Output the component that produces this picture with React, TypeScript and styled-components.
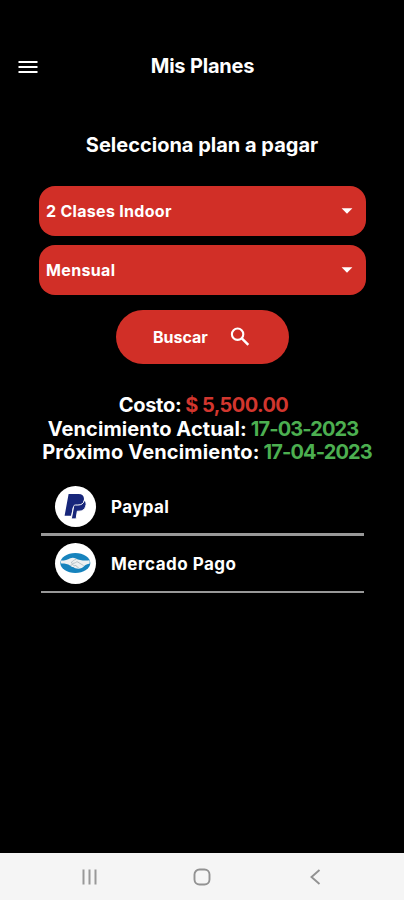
import React from "react";
import styled, { createGlobalStyle } from "styled-components";

const Global = createGlobalStyle`
  * { box-sizing: border-box; }
  body { margin: 0; background: #000; }
`;

const Screen = styled.div`
  width: 404px;
  height: 900px;
  display: flex;
  flex-direction: column;
  background: #000;
  color: #fff;
  font-family: Inter, "Liberation Sans", sans-serif;
  font-weight: 700;
  overflow: hidden;
`;

const Header = styled.header`
  display: grid;
  grid-template-columns: 56px 1fr 55px;
  align-items: center;
  height: 52px;
  margin-top: 40px;
`;

const MenuButton = styled.button`
  display: flex;
  justify-content: center;
  padding: 0;
  border: 0;
  background: none;
`;

const Label = styled.span<{ $size?: number; $spacing?: number; $color?: string }>`
  font-size: ${(p) => p.$size ?? 16}px;
  letter-spacing: ${(p) => p.$spacing ?? 0}px;
  color: ${(p) => p.$color ?? "#fff"};
  line-height: 24px;
  white-space: nowrap;
`;

const Title = styled.h1`
  display: flex;
  justify-content: center;
  margin: 0;
  font-weight: 700;
`;

const Subtitle = styled.h2`
  display: flex;
  justify-content: center;
  height: 24px;
  margin: 41px 0 29px;
  font-weight: 700;
`;

const Fields = styled.div`
  display: flex;
  flex-direction: column;
  gap: 9px;
  padding: 0 38px 0 39px;
`;

const Select = styled.div`
  display: flex;
  align-items: center;
  justify-content: space-between;
  height: 50px;
  padding: 0 13px 0 7px;
  border-radius: 16px;
  background: #d12f27;
`;

const SearchButton = styled.button`
  display: flex;
  align-items: center;
  gap: 21px;
  width: 173px;
  height: 54px;
  margin: 14.5px 0 0 116px;
  padding: 0 0 0 37px;
  border: 0;
  border-radius: 27px;
  background: #d12f27;
  font: inherit;
`;

const Summary = styled.section`
  display: flex;
  flex-direction: column;
  align-items: center;
  margin: 29.5px 0 0 3px;
`;

const SummaryLine = styled.div<{ $shift?: number }>`
  display: flex;
  gap: 4px;
  height: 23.7px;
  margin-left: ${(p) => p.$shift ?? 0}px;
`;

const Methods = styled.ul`
  list-style: none;
  margin: 16px 40px 0 41px;
  padding: 0;
`;

const Method = styled.li<{ $line: number; $height: number }>`
  display: flex;
  align-items: center;
  gap: 15px;
  height: ${(p) => p.$height}px;
  padding-left: 14px;
  border-bottom: ${(p) => p.$line}px solid #989898;
`;

const Logo = styled.span`
  display: flex;
  width: 41px;
  height: 41px;
  border-radius: 50%;
  background: #fff;
`;

const NavBar = styled.nav`
  display: grid;
  grid-template-columns: 26px 1fr 26px 1fr 26px;
  align-items: center;
  height: 47px;
  margin-top: auto;
  padding: 0 76px 0 76px;
  background: #f5f5f5;
`;

const NavItem = styled.span<{ $column: number }>`
  grid-column: ${(p) => p.$column};
  display: flex;
`;

const Caret = () => (
  <svg width="12" height="6" viewBox="0 0 12 6">
    <path d="M.6.3h10.8L6 5.8z" fill="#fff" />
  </svg>
);

const PaypalMark = () => (
  <svg width="41" height="41" viewBox="0 0 41 41">
    <path d="M13.6 8h10c4 0 6 2.5 5.2 6.2-1.1 5-3.8 7.3-8.8 7.3h-2.2l-1.7 8.2H9.6z" fill="#17267a" />
    <path d="M29.3 14.4c1.9 1.2 2.2 3.3 1.4 5.8-1 3.5-3.3 5-6.8 5h-1.6l-1.2 7.7h-4.8l2.3-12.3c.2-1 .8-1.6 1.8-1.6h2.5c3.6 0 5.6-1.4 6.4-4.6z" fill="#17267a" stroke="#fff" strokeWidth="1" />
  </svg>
);

const MercadoMark = () => (
  <svg width="41" height="41" viewBox="0 0 41 41">
    <ellipse cx="20.3" cy="20" rx="15" ry="10" fill="#1683bd" />
    <path d="M6 17.6c3.5.1 6.4-.9 9.3-2.4 2-.9 3.7-.6 5.5.2 3.5 1.7 8 2.7 13.7 1.9.4 1.3.3 2.3 0 3.4-2.3.3-3.7 1-5 2.1-1.5 1.8-3.8 2.9-6.2 3-2 0-3.9-.5-5.1-1.7-1.4-.2-2.5-.8-3.2-1.7-2.2-1.2-5.4-1.9-8.8-1.8-.5-1-.5-2-.2-3z" fill="#edf0f1" />
    <path d="M21.4 16.3c-2.6.3-3.6 2.1-5.4 3.4 1.8 1.4 4.2.4 6-1.1l6.7 4M15 22.6l2.8-1.2 1.3 1.5 2-.5.8 1.5 1.8.6" fill="none" stroke="#a9b8bc" strokeWidth=".8" />
  </svg>
);

const summary = [
  { label: "Costo:", value: "$ 5,500.00", color: "#d2362e", ls: -0.3, vs: -0.6, shift: 0 },
  { label: "Vencimiento Actual:", value: "17-03-2023", color: "#4caf50", ls: 0.1, vs: -0.9, shift: -1 },
  { label: "Próximo Vencimiento:", value: "17-04-2023", color: "#4caf50", ls: 0.16, vs: -0.9, shift: 7 },
];

export default function App() {
  return (
    <Screen>
      <Global />
      <Header>
        <MenuButton aria-label="Menú">
          <svg width="20" height="14" viewBox="0 0 20 14">
            <path d="M.5 3h19M.5 8h19M.5 13h19" stroke="#fff" strokeWidth="2" />
          </svg>
        </MenuButton>
        <Title><Label $size={20} $spacing={-0.2}>Mis Planes</Label></Title>
      </Header>
      <Subtitle><Label $size={20}>Selecciona plan a pagar</Label></Subtitle>
      <Fields>
        <Select><Label $spacing={0.3}>2 Clases Indoor</Label><Caret /></Select>
        <Select><Label $spacing={0.35}>Mensual</Label><Caret /></Select>
      </Fields>
      <SearchButton>
        <Label>Buscar</Label>
        <svg width="22" height="22" viewBox="0 0 22 22" fill="none" stroke="#fff" strokeWidth="2.1">
          <circle cx="8.6" cy="8.2" r="5.7" />
          <path d="m12.8 12.4 6.5 6.5" strokeWidth="2.5" />
        </svg>
      </SearchButton>
      <Summary>
        {summary.map((s) => (
          <SummaryLine key={s.label} $shift={s.shift}>
            <Label $size={20} $spacing={s.ls}>{s.label}</Label>
            <Label $size={20} $spacing={s.vs} $color={s.color}>{s.value}</Label>
          </SummaryLine>
        ))}
      </Summary>
      <Methods>
        <Method $line={3} $height={56}>
          <Logo><PaypalMark /></Logo><Label $size={17} $spacing={0.4}>Paypal</Label>
        </Method>
        <Method $line={2} $height={57}>
          <Logo><MercadoMark /></Logo><Label $size={17} $spacing={0.5}>Mercado Pago</Label>
        </Method>
      </Methods>
      <NavBar>
        <NavItem $column={1}>
          <svg width="26" height="20" viewBox="0 0 26 20">
            <path d="M7.5 2.5v15M13.5 2.5v15M19.5 2.5v15" stroke="#999" strokeWidth="2" />
          </svg>
        </NavItem>
        <NavItem $column={3}>
          <svg width="26" height="20" viewBox="0 0 26 20">
            <rect x="5.5" y="2.5" width="15" height="15" rx="5" fill="none" stroke="#929292" strokeWidth="1.9" />
          </svg>
        </NavItem>
        <NavItem $column={5}>
          <svg width="26" height="20" viewBox="0 0 26 20">
            <path d="m17.5 3-8 7 8 7" fill="none" stroke="#929292" strokeWidth="1.9" />
          </svg>
        </NavItem>
      </NavBar>
    </Screen>
  );
}
